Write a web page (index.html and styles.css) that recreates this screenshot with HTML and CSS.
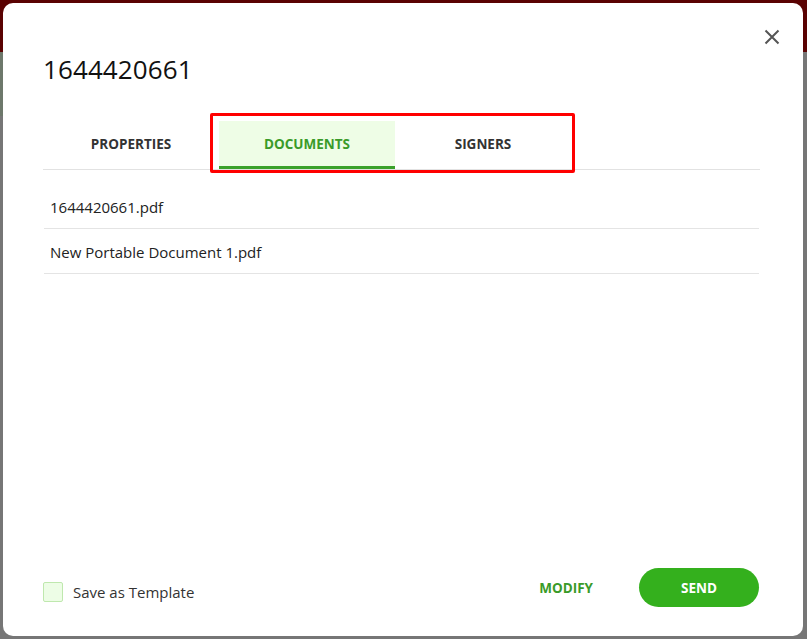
FILE: index.html
```html
<!DOCTYPE html>
<html lang="en">
<head>
    <meta charset="UTF-8">
    <meta name="viewport" content="width=device-width, initial-scale=1.0">
    <title>1644420661</title>
    <link rel="stylesheet" href="styles.css">
</head>
<body>
    <header class="app-bar"></header>
    <main class="app-body">
        <div class="app-side"></div>
    </main>

    <div class="modal">
        <button class="close-btn" aria-label="Close">
            <svg width="16" height="16" viewBox="0 0 16 16">
                <path d="M1.5 1.5 L14.5 14.5 M14.5 1.5 L1.5 14.5" stroke="#555" stroke-width="2" fill="none"/>
            </svg>
        </button>
        <h1 class="modal-title">1644420661</h1>

        <nav class="tabs">
            <div class="tab">PROPERTIES</div>
            <div class="tab active">DOCUMENTS</div>
            <div class="tab">SIGNERS</div>
        </nav>

        <ul class="doc-list">
            <li>1644420661.pdf</li>
            <li>New Portable Document 1.pdf</li>
        </ul>

        <footer class="modal-footer">
            <label class="template-check">
                <span class="box"></span>
                Save as Template
            </label>
            <div class="actions">
                <button class="btn-text">MODIFY</button>
                <button class="btn-send">SEND</button>
            </div>
        </footer>

        <div class="highlight"></div>
    </div>
</body>
</html>
```

FILE: styles.css
```css
* {
    box-sizing: border-box;
}
html, body {
    margin: 0;
    height: 100%;
}
body {
    font-family: "Open Sans", "Noto Sans", sans-serif;
    background: #737373;
    display: flex;
    flex-direction: column;
    overflow: hidden;
}
.app-bar {
    height: 52px;
    background: #5a0202;
}
.app-body {
    flex: 1;
    background: #767676;
}
.app-side {
    width: 3px;
    height: 64px;
    background: #6d786b;
}

/* modal */
.modal {
    position: absolute;
    top: 3px;
    left: 3px;
    width: 800px;
    height: 633px;
    background: #fff;
    border-radius: 10px;
    padding: 48px 44px 29px 40px;
    display: flex;
    flex-direction: column;
}
.close-btn {
    position: absolute;
    top: 26px;
    right: 23px;
    width: 16px;
    height: 16px;
    padding: 0;
    border: none;
    background: none;
    cursor: pointer;
}
.modal-title {
    margin: 0;
    font-size: 26px;
    font-weight: 400;
    line-height: 36px;
    color: #111;
    letter-spacing: 0.1px;
}

.tabs {
    display: flex;
    margin-top: 33px;
    margin-right: -1px;
    border-bottom: 1px solid #e2e2e2;
}
.tab {
    width: 176px;
    height: 49px;
    display: flex;
    align-items: center;
    justify-content: center;
    font-size: 13.5px;
    font-weight: 700;
    color: #333;
    border-bottom: 3px solid transparent;
    padding-top: 1px;
}
.tab.active {
    background: #eefde6;
    color: #3a9b29;
    border-bottom-color: #3aa12a;
    margin-top: 1px;
    height: 48px;
    padding-top: 0;
}

.doc-list {
    list-style: none;
    margin: 14px 0 0 1px;
    padding: 0;
}
.doc-list li {
    height: 45px;
    padding: 1px 6px 0;
    display: flex;
    align-items: center;
    font-size: 15px;
    color: #222;
    border-bottom: 1px solid #e4e4e4;
}

.modal-footer {
    margin-top: auto;
    display: flex;
    align-items: center;
    justify-content: space-between;
}
.template-check {
    display: flex;
    align-items: center;
    gap: 10px;
    margin-top: 9px;
    font-size: 15px;
    color: #333;
}
.template-check .box {
    width: 20px;
    height: 20px;
    border: 1px solid #bfe8ae;
    border-radius: 2px;
    background: #edfde6;
}
.actions {
    display: flex;
    align-items: center;
    gap: 30px;
}
.btn-text {
    border: none;
    background: none;
    font-family: inherit;
    font-size: 13.5px;
    font-weight: 700;
    color: #3a9b29;
    padding: 0 16px;
    cursor: pointer;
}
.btn-send {
    width: 120px;
    height: 39px;
    border: none;
    border-radius: 20px;
    background: #34b01d;
    color: #fff;
    font-family: inherit;
    font-size: 13.5px;
    font-weight: 700;
    cursor: pointer;
}

/* annotation box drawn over the tabs */
.highlight {
    position: absolute;
    left: 207px;
    top: 110px;
    width: 365px;
    height: 60px;
    border: 3px solid #ff0000;
    border-radius: 2px;
    pointer-events: none;
}
```
